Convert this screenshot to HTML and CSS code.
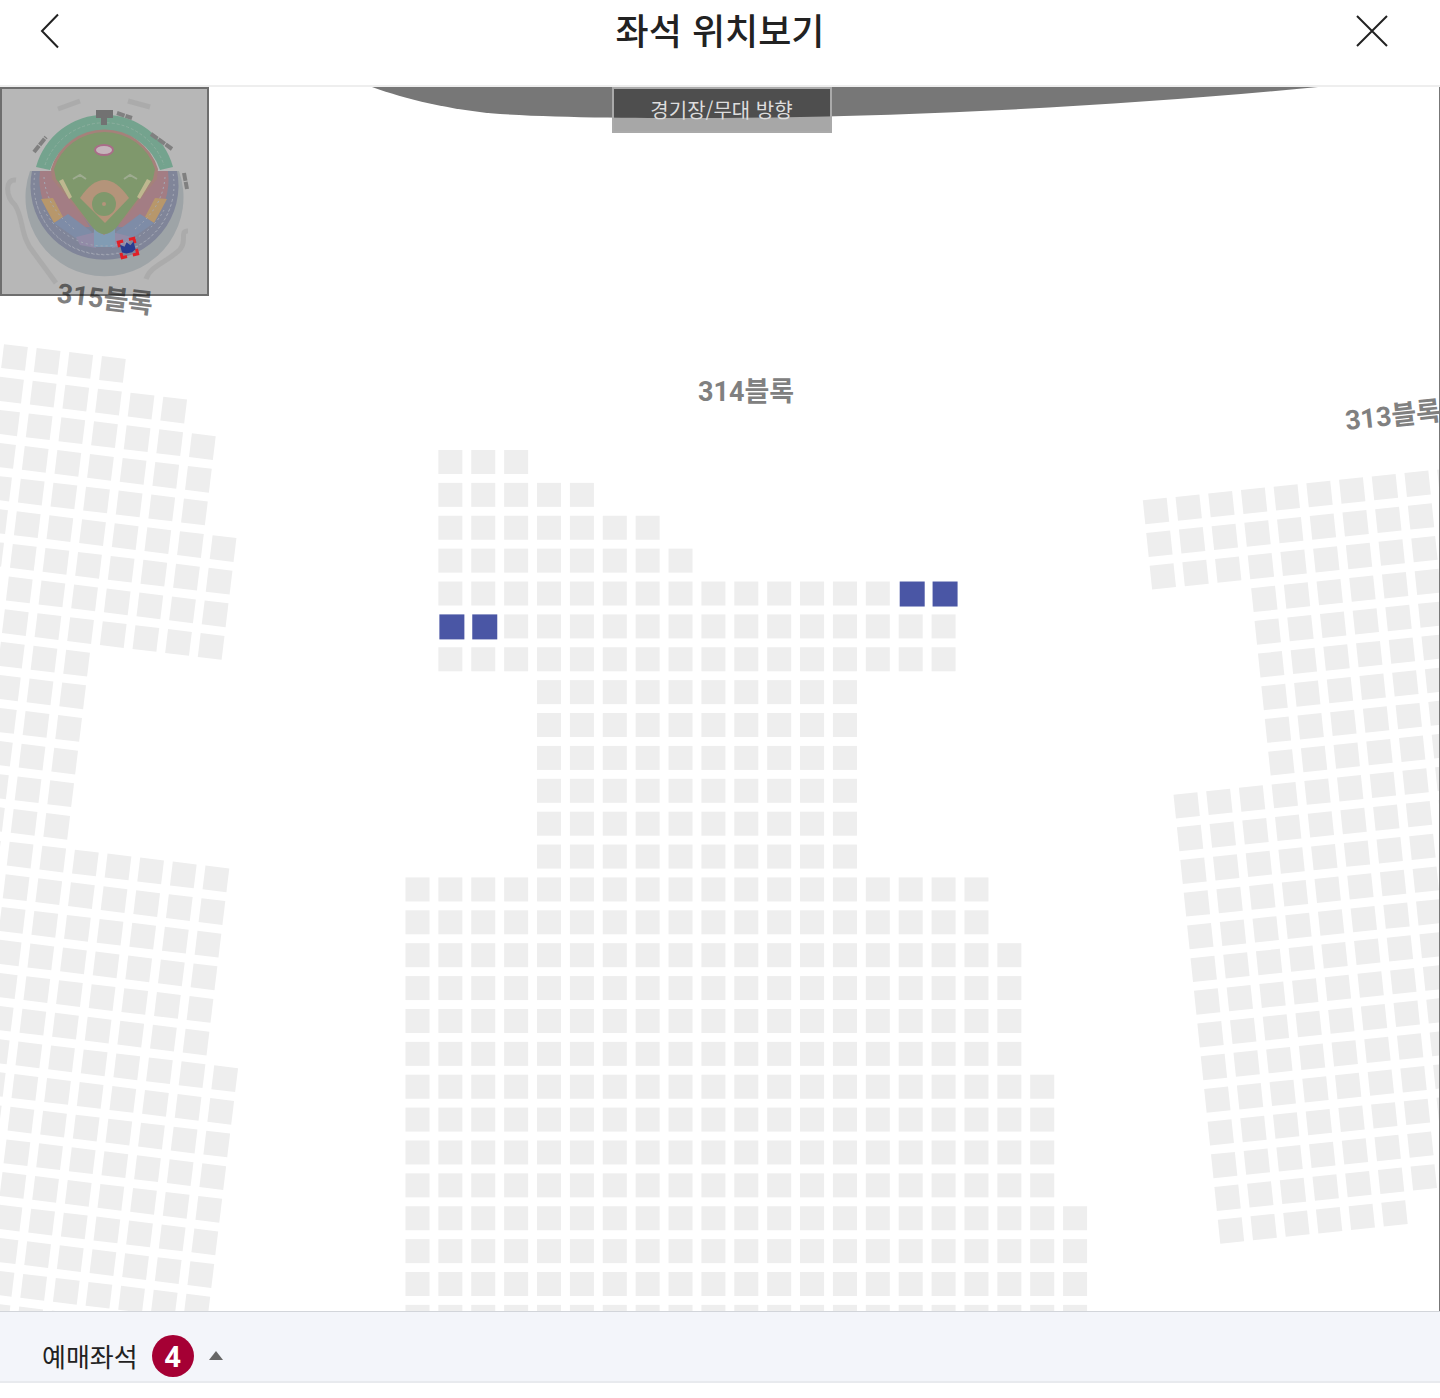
FILE: index.html
```html
<!DOCTYPE html>
<html lang="ko">
<head>
<meta charset="utf-8">
<meta name="viewport" content="width=device-width, initial-scale=1">
<title>좌석 위치보기</title>
<link rel="stylesheet" href="styles.css">
</head>
<body>
<header class="topbar">
  <button class="icon-button" type="button" aria-label="뒤로">
    <svg width="36" height="36" viewBox="0 0 36 36" aria-hidden="true"><path d="M14 1.500L-2 18L14 34.500"/></svg>
  </button>
  <h1 class="title">좌석 위치보기</h1>
  <button class="icon-button" type="button" aria-label="닫기">
    <svg width="36" height="36" viewBox="0 0 36 36" aria-hidden="true"><path d="M7 3L37 33M37 3L7 33"/></svg>
  </button>
</header>

<main class="map">
  <svg class="seats" viewBox="0 0 1439 1224" role="img" aria-label="좌석 배치도">
    <path class="stage" d="M372 0C405 12 450 23 500 27C560 31 640 31 720 31C920 30 1130 18 1318 0Z"/>
    <g id="block-315" transform="translate(14.500 270.500) rotate(6.950)"></g>
    <g id="block-314" transform="translate(417.500 375)"></g>
    <g id="block-313" transform="translate(1156 424) rotate(-5.950)"></g>
    <text class="block-name" transform="translate(104 221) rotate(7)">315블록</text>
    <text class="block-name" transform="translate(746 314)">314블록</text>
    <text class="block-name" transform="translate(1394 338) rotate(-6)">313블록</text>
  </svg>

  <div class="minimap">
    <svg viewBox="2 2 205 205" role="img" aria-label="경기장 전체 보기">
      <g opacity="0.85">
      <g class="mm-ramp">
        <path d="M16 93C4 92 6 110 15 118C24 132 20 150 34 166L56 196"/>
        <path d="M188 144C178 144 190 156 176 166C164 176 150 180 146 192"/>
      </g>
      <path class="mm-outer" d="M30 84A79 79 0 1 0 179 84L172 84L104 150L36 84Z"/>
      <path class="mm-navy" d="M32 84A74 74 0 1 0 177 84L168 84L104 140L40 84Z"/>
      <path class="mm-dots" d="M35 86A70 70 0 1 0 173 86"/>
      <path class="mm-dots" d="M36 114A70 70 0 0 0 172 114"/>
      <path class="mm-red" d="M40 84A65 65 0 0 0 60 140L90 140L53 84ZM168 84A65 65 0 0 1 148 140L118 140L155 84Z"/>
      <path class="mm-orange" d="M41 112L53 111L63 130L54 136ZM167 112L155 111L145 130L154 136Z"/>
      <path class="mm-blue" d="M54 136L68 127L92 145L84 157ZM154 136L140 127L116 145L124 157Z"/>
      <path class="mm-violet" d="M76 150L96 145V161L80 158ZM132 150L112 145V161L128 158Z"/>
      <path class="mm-sky" d="M94 138H115V160H94Z"/>
      <path class="mm-dots" d="M44 123A68 68 0 0 0 164 123"/>
      <path class="mm-dots" d="M44 90Q46 120 74 142M165 90Q163 120 135 142"/>
      <path class="mm-green" d="M36 80A71 71 0 0 1 173 80L160 83A58 58 0 0 0 50 83Z"/>
      <path class="mm-seam" d="M45 78A63 63 0 0 1 164 78"/>
      <path class="mm-track" d="M51 82A56 56 0 0 1 158 82L157 92L119 138L104 148L90 138L52 92Z"/>
      <path class="mm-grass" d="M54 82A53 53 0 0 1 155 82L153 92L116 141Q104 153 93 141L56 92Z"/>
      <path class="mm-clay" d="M80 111Q104 75 129 111L105 136Z"/>
      <circle class="mm-grass" cx="104" cy="117" r="12"/>
      <circle class="mm-clay" cx="104" cy="117" r="2"/>
      <path class="mm-bench" d="M59 94L63 92L72 110L69 112ZM151 94L147 92L137 110L140 112Z"/>
      <path class="mm-mark" d="M73 92L80 88L86 92M124 92L130 88L137 92"/>
      <ellipse class="mm-logo" cx="104" cy="63" rx="9" ry="5"/>
      <path class="mm-board" d="M96 23H113V31H107V38H101V31H96Z"/>
      <path class="mm-sign" d="M34 65L46 50M151 47L172 62M117 26L132 31M184 86L187 102"/>
      <path class="mm-sign-light" d="M58 22L80 14M128 14L150 20"/>
      </g>
      <g transform="rotate(-14 128 161)">
        <path class="mm-here" d="M120 158V153H125M131 153H136V158M136 164V169H131M125 169H120V164"/>
        <path class="mm-block" d="M121 156L125 159L128 155L131 159L135 156V164L131 166H125L121 164Z"/>
      </g>
    </svg>
  </div>
  <p class="direction">경기장/무대 방향</p>
</main>

<footer class="summary">
  <button class="summary-toggle" type="button" aria-expanded="false">
    <span>예매좌석</span>
    <span class="count">4</span>
    <svg width="16" height="10" viewBox="0 0 16 10" aria-hidden="true"><path d="M8 0L15 9H1Z"/></svg>
  </button>
</footer>
<script src="seats.js"></script>
</body>
</html>
```
FILE: styles.css
```css
* {
  box-sizing: border-box;
}

body {
  margin: 0;
  background: #fff;
  color: #222;
  font-family: "Noto Sans CJK KR", "Noto Sans", sans-serif;
}

button {
  border: 0;
  padding: 0;
  background: none;
  color: inherit;
  font: inherit;
  cursor: pointer;
}

svg {
  display: block;
}

.topbar {
  display: flex;
  justify-content: space-between;
  align-items: flex-start;
  height: 87px;
  padding: 5px 54px 0 44px;
  border-bottom: 2px solid #eee;
}

.icon-button {
  display: flex;
  padding: 8px 0;
}

.icon-button svg {
  overflow: visible;
}

.icon-button path {
  fill: none;
  stroke: #222;
  stroke-width: 2;
}

.title {
  flex: 1;
  margin: 0;
  padding-left: 10px;
  font-size: 36px;
  line-height: 48px;
  font-weight: 500;
  text-align: center;
}

.map {
  position: relative;
  overflow: hidden;
  border-right: 1px solid #777;
}

.seats {
  width: 100%;
  height: auto;
}

.stage {
  fill: #777;
}

.seat {
  fill: #eee;
}

.seat-booked {
  fill: #4a56a5;
}

.block-name {
  fill: #808080;
  font-family: Roboto, "Noto Sans CJK KR", sans-serif;
  font-size: 27px;
  font-weight: 700;
  text-anchor: middle;
}

.minimap {
  position: absolute;
  top: 0;
  left: 0;
  width: 209px;
  border: 2px solid #0006;
  background: #00000048;
}

.direction {
  position: absolute;
  top: 0;
  left: 50%;
  width: 220px;
  margin: 0 2px;
  border: 2px solid #aaa;
  background: #00000058;
  color: #ddd;
  font-size: 20px;
  line-height: 42px;
  text-align: center;
  transform: translateX(-50%);
}

.mm-ramp path { fill: none; stroke: #aaa; stroke-width: 5; }
.mm-outer { fill: #9aa1a5; }
.mm-navy { fill: #777d94; }
.mm-dots { fill: none; stroke: #a2a7b6; stroke-width: 1; stroke-dasharray: 2 3; }
.mm-red { fill: #a0747c; }
.mm-orange { fill: #b8925e; }
.mm-blue { fill: #7585a5; }
.mm-violet { fill: #8c84a5; }
.mm-sky { fill: #7898b4; }
.mm-green { fill: #69a087; }
.mm-seam { fill: none; stroke: #86ae9b; stroke-width: 1; stroke-dasharray: 3 2; }
.mm-track { fill: #a27870; }
.mm-grass { fill: #76935f; }
.mm-clay { fill: #b48e70; }
.mm-bench { fill: #c0b889; }
.mm-mark { fill: none; stroke: #9aaa8a; stroke-width: 2; }
.mm-logo { fill: #c8b4bc; stroke: #a86080; stroke-width: 2; }
.mm-board { fill: #666; }
.mm-sign { fill: none; stroke: #777; stroke-width: 4; stroke-dasharray: 8 1; }
.mm-sign-light { fill: none; stroke: #aaa; stroke-width: 5; }
.mm-here { fill: none; stroke: #e02028; stroke-width: 3; }
.mm-block { fill: #283c90; }

.summary {
  padding: 23px 42px 4px;
  border-top: 1px solid #d2d5da;
  border-bottom: 2px solid #e8eaee;
  background: #f3f5fa;
}

.summary-toggle {
  display: flex;
  align-items: center;
  gap: 14px;
  font-size: 26px;
  line-height: 42px;
}

.count {
  width: 42px;
  height: 42px;
  border-radius: 50%;
  background: #a50034;
  color: #fff;
  font-family: "Noto Sans", sans-serif;
  font-size: 28px;
  font-weight: 700;
  text-align: center;
}

.summary-toggle path {
  fill: #666;
}
```
FILE: seats.js
```js
const PITCH = 32.88;
const SIZE = 24;

// Each entry: [number of rows, first column, last column]
const blocks = {
  "block-315": [
    [1, -1, 3], [1, -1, 5], [3, -1, 6], [4, -1, 7], [6, -1, 3],
    [6, 0, 8], [8, 1, 9], [2, 2, 9]
  ],
  "block-314": [
    [1, 1, 3], [1, 1, 5], [1, 1, 7], [1, 1, 8], [3, 1, 16],
    [6, 4, 13], [2, 0, 17], [4, 0, 18], [4, 0, 19], [4, 0, 20]
  ],
  "block-313": [
    [3, 0, 9], [6, 3, 9], [13, 0, 8], [1, 0, 5]
  ]
};

const booked = new Set(["4-15", "4-16", "5-1", "5-2"]);

for (const [id, runs] of Object.entries(blocks)) {
  const group = document.getElementById(id);
  let row = 0;
  for (const [count, first, last] of runs) {
    for (let i = 0; i < count; i++, row++) {
      for (let col = first; col <= last; col++) {
        const isBooked = id === "block-314" && booked.has(`${row}-${col}`);
        const grow = isBooked ? 1 : 0;
        const seat = document.createElementNS("http://www.w3.org/2000/svg", "rect");
        seat.setAttribute("class", isBooked ? "seat-booked" : "seat");
        seat.setAttribute("x", col * PITCH - SIZE / 2 + grow);
        seat.setAttribute("y", row * PITCH - SIZE / 2);
        seat.setAttribute("width", SIZE + grow);
        seat.setAttribute("height", SIZE + grow);
        group.append(seat);
      }
    }
  }
}
```
